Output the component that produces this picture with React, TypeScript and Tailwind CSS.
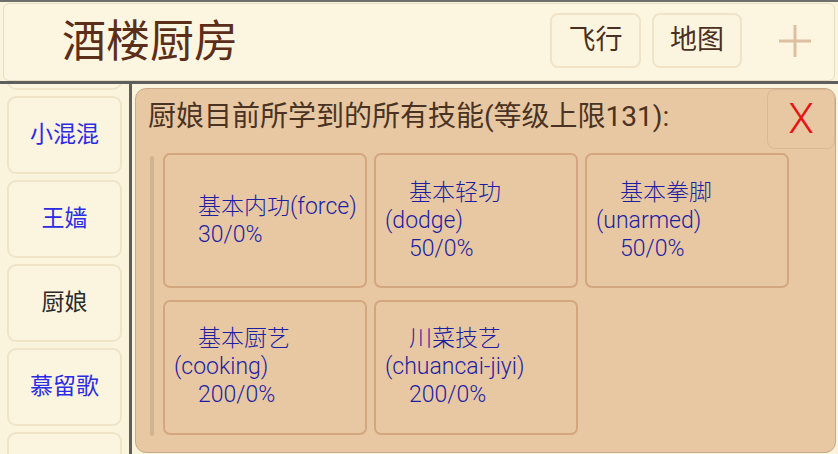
import React from "react";

const FONT = { fontFamily: '"Roboto", "Noto Sans CJK SC", sans-serif' };

type Skill = { lines: { t: string; indent: boolean }[] };

const skills: Skill[] = [
  { lines: [{ t: "基本内功(force)", indent: true }, { t: "30/0%", indent: true }] },
  { lines: [{ t: "基本轻功", indent: true }, { t: "(dodge)", indent: false }, { t: "50/0%", indent: true }] },
  { lines: [{ t: "基本拳脚", indent: true }, { t: "(unarmed)", indent: false }, { t: "50/0%", indent: true }] },
  { lines: [{ t: "基本厨艺", indent: true }, { t: "(cooking)", indent: false }, { t: "200/0%", indent: true }] },
  { lines: [{ t: "川菜技艺", indent: true }, { t: "(chuancai-jiyi)", indent: false }, { t: "200/0%", indent: true }] },
];

const people = [
  { name: "", color: "text-[#2b2be6]" },
  { name: "小混混", color: "text-[#2b2be6]" },
  { name: "王嫱", color: "text-[#2b2be6]" },
  { name: "厨娘", color: "text-[#2a2a2a]" },
  { name: "慕留歌", color: "text-[#2b2be6]" },
  { name: "", color: "text-[#2b2be6]" },
];

export default function App() {
  return (
    <div className="w-[838px] h-[454px] overflow-hidden bg-[#faf4dd] flex flex-col" style={FONT}>
      {/* Header */}
      <div className="border-t-[2px] border-[#6e6e6e] bg-[#faf4dd] pt-[1px] px-[3px]">
        <div className="h-[78px] rounded-[6px] border border-[#e6dcc2] bg-[#fcf6e0] flex items-center">
          <div className="pl-[58px] text-[44px] leading-none text-[#5b2e1a] flex-1">酒楼厨房</div>
          <div className="flex items-center gap-[11px] pr-[22px] -mt-[3px]">
            <div className="w-[91px] h-[55px] rounded-[8px] border-2 border-[#f0e3c7] bg-[#fbf5e0] flex items-center justify-center text-[27px] text-[#4a3020]">
              飞行
            </div>
            <div className="w-[90px] h-[55px] rounded-[8px] border-2 border-[#f0e3c7] bg-[#fbf5e0] flex items-center justify-center text-[27px] text-[#4a3020]">
              地图
            </div>
            <svg width="34" height="34" viewBox="0 0 34 34" className="ml-[25px]">
              <line x1="17" y1="1" x2="17" y2="33" stroke="#dcc0a0" strokeWidth="3" />
              <line x1="1" y1="17" x2="33" y2="17" stroke="#dcc0a0" strokeWidth="3" />
            </svg>
          </div>
        </div>
      </div>
      <div className="h-[3px] bg-[#5e5e5e]" />

      {/* Body */}
      <div className="flex flex-1 min-h-0">
        {/* Sidebar */}
        <div className="w-[129px] overflow-hidden bg-[#faf4dd]">
          <div className="flex flex-col gap-[6px] px-[7px] -mt-[72px]">
            {people.map((p, i) => (
              <div
                key={i}
                className={`h-[78px] shrink-0 rounded-[9px] border-2 border-[#f0e4c8] bg-[#fbf5e0] flex items-center justify-center text-[23px] ${p.color}`}
              >
                {p.name}
              </div>
            ))}
          </div>
        </div>
        <div className="w-[3px] bg-[#5e5e5e]" />

        {/* Main panel */}
        <div className="flex-1 pl-[3px] pr-[2px] pt-[4px] pb-[1px] bg-[#faf4dd]">
          <div className="h-full rounded-[11px] border border-[#c9aa88] bg-[#e8c8a3] flex flex-col">
            <div className="flex h-[63px]">
              <div className="flex-1 pl-[12px] pt-[10px] text-[28px] leading-[36px] text-[#4a3322]">
                厨娘目前所学到的所有技能(等级上限131):
              </div>
              <div className="w-[68px] h-[60px] rounded-[8px] border border-[#d8b895] flex items-center justify-center text-[42px] font-light leading-none text-[#e81414]">
                X
              </div>
            </div>
            <div className="flex pt-[1px]">
              <div className="ml-[14px] mt-[3px] w-[4px] h-[280px] rounded-[2px] bg-[#cfb392]" />
              <div className="ml-[9px] grid grid-cols-[204px_204px_204px] gap-x-[7px] gap-y-[10px]">
                {skills.map((s, i) => (
                  <div
                    key={i}
                    className="h-[135px] rounded-[7px] border-2 border-[#d3a67f] bg-[#e8c8a3] flex flex-col justify-center px-[9px] text-[23px] leading-[28px] font-light text-[#1e1ea2] whitespace-nowrap"
                  >
                    {s.lines.map((l, j) => (
                      <div key={j} className={l.indent ? "pl-[24px]" : ""}>
                        {l.t}
                      </div>
                    ))}
                  </div>
                ))}
              </div>
            </div>
          </div>
        </div>
      </div>
    </div>
  );
}
